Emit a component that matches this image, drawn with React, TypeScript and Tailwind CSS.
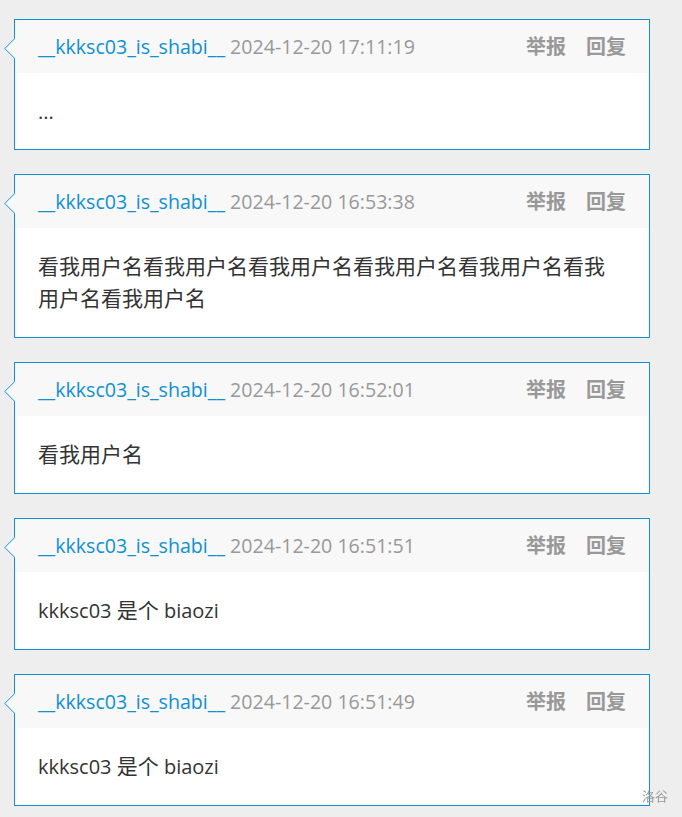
import React from 'react'

interface Reply {
  user: string
  time: string
  content: string
}

const REPLIES: Reply[] = [
  { user: '__kkksc03_is_shabi__', time: '2024-12-20 17:11:19', content: '...' },
  {
    user: '__kkksc03_is_shabi__',
    time: '2024-12-20 16:53:38',
    content: '看我用户名看我用户名看我用户名看我用户名看我用户名看我用户名看我用户名',
  },
  { user: '__kkksc03_is_shabi__', time: '2024-12-20 16:52:01', content: '看我用户名' },
  { user: '__kkksc03_is_shabi__', time: '2024-12-20 16:51:51', content: 'kkksc03 是个 biaozi' },
  { user: '__kkksc03_is_shabi__', time: '2024-12-20 16:51:49', content: 'kkksc03 是个 biaozi' },
]

const CJK = /[\u4e00-\u9fff]/

// CJK glyphs render a bit larger than the latin text in the original
const renderContent = (text: string) =>
  text.split(/([\u4e00-\u9fff]+)/).map((part, i) =>
    CJK.test(part) ? (
      <span key={i} className="text-[21px] leading-[26px]">
        {part}
      </span>
    ) : (
      <React.Fragment key={i}>{part}</React.Fragment>
    ),
  )

const ReplyCard: React.FC<{ reply: Reply }> = ({ reply }) => {
  const hasCjk = CJK.test(reply.content)

  return (
    <div className="relative w-[636px] border border-[#0e90d2] bg-white">
      {/* left pointer */}
      <svg
        className="absolute left-[-11px] top-[18px]"
        width="11"
        height="21"
        viewBox="0 0 11 21"
      >
        <polygon points="11,0 0.8,10.5 11,21" fill="#f8f8f8" />
        <polyline points="11,0.3 0.8,10.5 11,20.7" fill="none" stroke="#0e90d2" strokeWidth="1" />
      </svg>

      {/* header */}
      <div className="flex items-center justify-between bg-[#f8f8f8] px-[23px] py-[11px] leading-[31px]">
        <div className="whitespace-nowrap">
          <span className="text-[#0e90d2]">{reply.user}</span>{' '}
          <span className="text-[#999]">{reply.time}</span>
        </div>
        <div className="flex gap-[20px] text-[20px] font-bold text-[#999]">
          <span>举报</span>
          <span>回复</span>
        </div>
      </div>

      {/* body */}
      <div
        className={
          hasCjk
            ? 'pl-[23px] pr-[24px] pt-[23px] pb-[22px] text-[20px] leading-[32px] text-[#333]'
            : 'pl-[23px] pr-[24px] pt-[23px] pb-[22px] text-[20px] leading-[31px] text-[#333]'
        }
      >
        {renderContent(reply.content)}
      </div>
    </div>
  )
}

export default function App() {
  return (
    <div
      className="relative min-h-[817px] bg-[#eee] pl-[14px] pt-[19px] pb-[12px] text-[19.6px]"
      style={{ fontFamily: '"Open Sans", "Noto Sans CJK SC", sans-serif' }}
    >
      <div className="flex flex-col gap-[24px]">
        {REPLIES.map((r, i) => (
          <ReplyCard key={i} reply={r} />
        ))}
      </div>
      <div className="fixed bottom-[11px] right-[14px] text-[13px] text-[#999]">洛谷</div>
    </div>
  )
}
